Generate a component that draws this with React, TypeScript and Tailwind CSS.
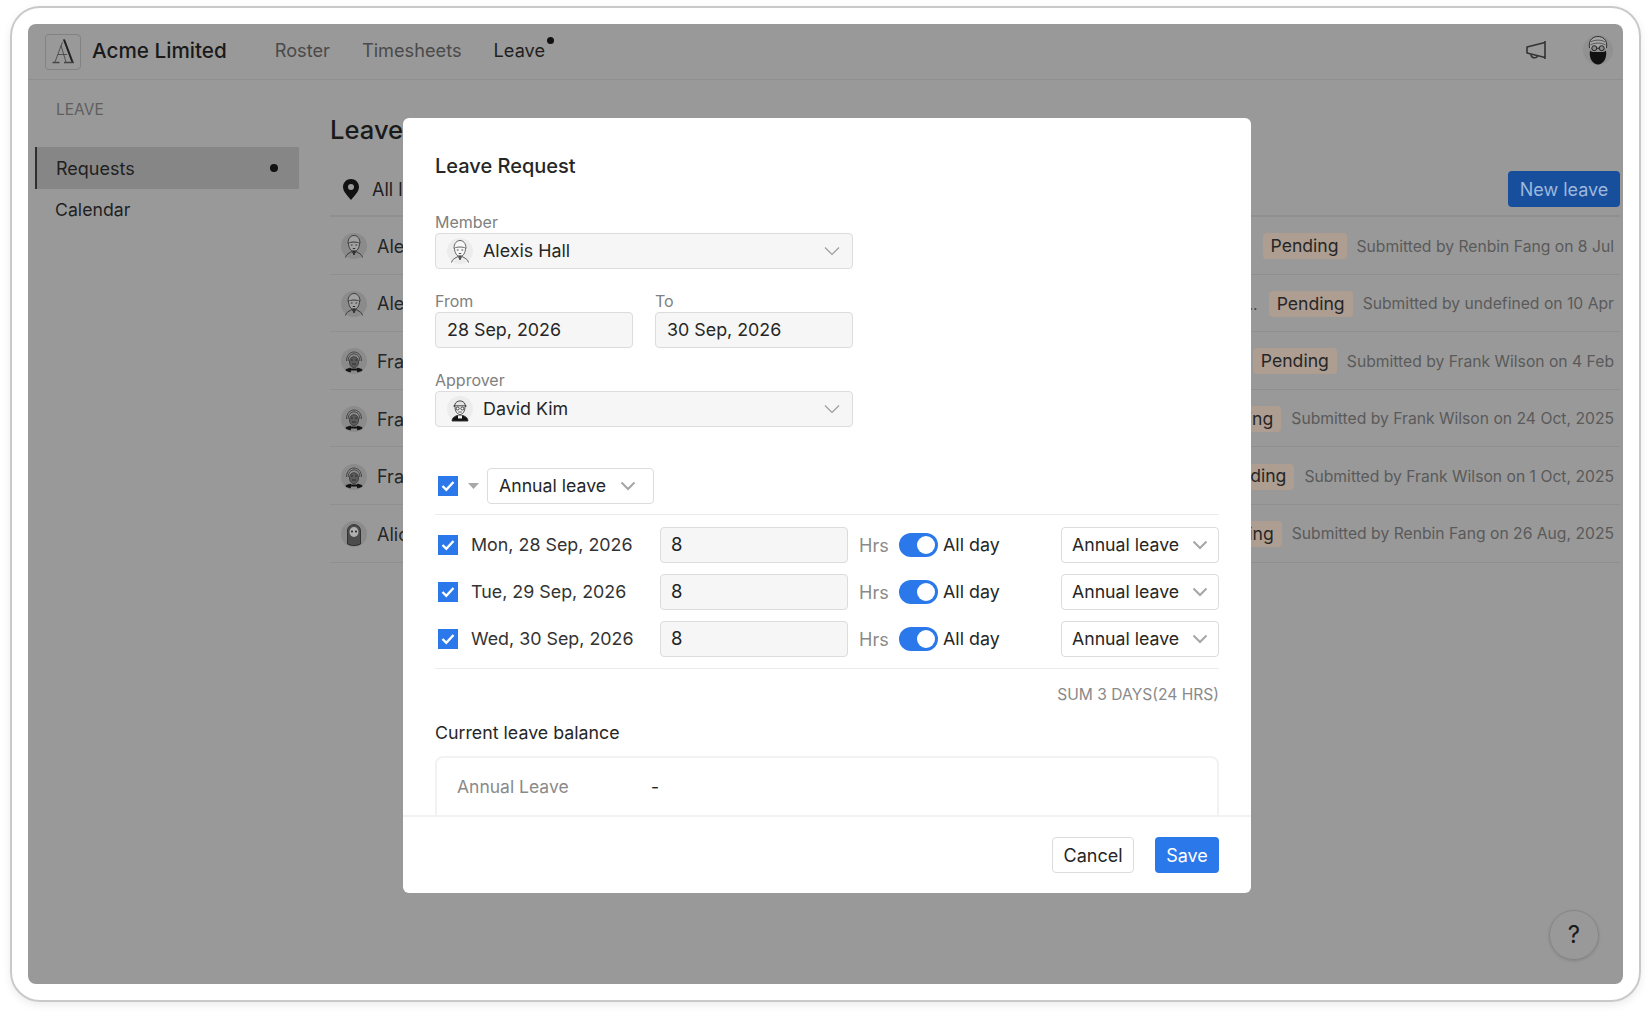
const font = "font-['Inter',sans-serif]";

const Logo = () => (
  <svg width="24" height="26" viewBox="0 0 24 26" fill="none" stroke="#333" strokeWidth="0.7" className="-mt-[2px]">
    <path d="M12.5 1.5L21 24M11.5 4L4 24M10 7.5L15 24M7 16.5H16" />
    <path d="M13 1.5L21.5 24" strokeWidth="2" stroke="#222" />
    <path d="M1.5 24.5H8.5M13 24.5H23" strokeWidth="1.5" stroke="#444" />
  </svg>
);

const Megaphone = () => (
  <svg width="22" height="22" viewBox="0 0 22 22" fill="none" stroke="#333" strokeWidth="1.6" strokeLinejoin="round" className="mb-[3px]">
    <path d="M20 2V20M20 3.5L2 8V14L20 18.5" />
    <path d="M6 15.5C6 19.5 12 19.8 12.5 16.5" />
  </svg>
);

const BeardAvatar = () => (
  <svg width="30" height="30" viewBox="0 0 30 30" className="mb-[4px]">
    <circle cx="15" cy="15" r="15" fill="#919191" />
    <path d="M6.5 13C5 4 11 1.5 15 1.5C19 1.5 25 4 23.5 13" fill="#a6a6a6" stroke="#222" strokeWidth="0.9" />
    <path d="M8 7C11 4.5 19 4.5 22 7M7.5 10C11 7.5 19 7.5 22.5 10" fill="none" stroke="#444" strokeWidth="0.8" />
    <circle cx="11.3" cy="13.2" r="2.5" fill="#8a8a8a" stroke="#222" strokeWidth="1" />
    <circle cx="18.7" cy="13.2" r="2.5" fill="#8a8a8a" stroke="#222" strokeWidth="1" />
    <path d="M13.8 13.2H16.2" stroke="#222" strokeWidth="1" />
    <path d="M7 15.5C8.5 17.5 11 17 15 17C19 17 21.5 17.5 23 15.5C24.5 24 19.5 29.5 15 29.5C10.5 29.5 5.5 24 7 15.5Z" fill="#111" />
  </svg>
);

type AvatarKind = "alexis" | "frank" | "alice" | "david";

const Avatar = ({ kind, light }: { kind: AvatarKind; light?: boolean }) => {
  const bg = light ? "#ececec" : "#8b8b8b";
  const skin = light ? "#f7f7f7" : "#a2a2a2";
  return (
    <svg width="26" height="26" viewBox="0 0 26 26" className="shrink-0">
      <circle cx="13" cy="13" r="13" fill={bg} />
      {kind === "alexis" && (
        <g fill="none" stroke={light ? "#555" : "#333"} strokeWidth="0.9">
          <path d="M7 10.5C7 5 10 2.5 13 2.5C16 2.5 19 5 19 10.5C16 8.5 10 8.5 7 10.5Z" fill={skin} />
          <path d="M7.5 10C7.5 15 10 18.5 13 18.5C16 18.5 18.5 15 18.5 10" fill={skin} />
          <path d="M9.8 12H11.6M14.4 12H16.2M11.8 15.5H14.2" strokeWidth="1.1" />
          <path d="M4.5 24.5C5 21 8.5 20 11 18.5L13 21.5L15 18.5C17.5 20 21 21 21.5 24.5" />
          <path d="M11.8 17.5L13 22L14.2 17.5" fill={light ? "#444" : "#222"} />
        </g>
      )}
      {kind === "david" && (
        <g fill="none" stroke="#333" strokeWidth="0.9">
          <path d="M7.5 10.5C7.5 3 18.5 3 18.5 10.5" fill={light ? "#e2e2e2" : "#777"} />
          <path d="M6.5 10H19.5" strokeWidth="1.2" />
          <path d="M8 10.5C8 15.5 10.5 18.5 13 18.5C15.5 18.5 18 15.5 18 10.5" fill={skin} />
          <circle cx="10.7" cy="12.5" r="1.5" />
          <circle cx="15.3" cy="12.5" r="1.5" />
          <path d="M11.3 16H14.7" />
          <path d="M5 25C5 21.5 8 20.5 10 19.5H16C18 20.5 21 21.5 21 25Z" fill="#111" />
          <path d="M11 19.5H15V22.5H11Z" fill="#eee" stroke="none" />
        </g>
      )}
      {kind === "frank" && (
        <g fill="none" stroke="#333" strokeWidth="0.8">
          <path d="M5.5 13C5.5 1 20.5 1 20.5 13" />
          <path d="M7.2 13C7.2 3.5 18.8 3.5 18.8 13" />
          <path d="M8.5 14C8.5 7 17.5 7 17.5 14C17.5 18 15 19.5 13 19.5C11 19.5 8.5 18 8.5 14Z" fill="#5c5c5c" />
          <path d="M10 12H12M14 12H16M11 16H15" stroke="#222" />
          <path d="M5 21.5L9.5 20V24L5 22.5ZM21 21.5L16.5 20V24L21 22.5Z" fill="#111" stroke="#111" />
          <path d="M9 21.5H17" stroke="#111" strokeWidth="2" />
        </g>
      )}
      {kind === "alice" && (
        <g>
          <path d="M6.5 23V10C6.5 1.5 19.5 1.5 19.5 10V23C16 25 10 25 6.5 23Z" fill="#4c4c4c" stroke="#222" strokeWidth="0.8" />
          <ellipse cx="13" cy="11" rx="4.5" ry="5" fill="#b0b0b0" />
          <circle cx="11" cy="10.5" r="0.9" fill="#111" />
          <circle cx="15" cy="10.5" r="0.9" fill="#111" />
        </g>
      )}
    </svg>
  );
};

const rows: { kind: AvatarKind; name: string; by: string; dots?: boolean }[] = [
  { kind: "alexis", name: "Alexis Hall", by: "Submitted by Renbin Fang on 8 Jul" },
  { kind: "alexis", name: "Alexis Hall", by: "Submitted by undefined on 10 Apr", dots: true },
  { kind: "frank", name: "Frank Wilson", by: "Submitted by Frank Wilson on 4 Feb" },
  { kind: "frank", name: "Frank Wilson", by: "Submitted by Frank Wilson on 24 Oct, 2025" },
  { kind: "frank", name: "Frank Wilson", by: "Submitted by Frank Wilson on 1 Oct, 2025" },
  { kind: "alice", name: "Alice Chen", by: "Submitted by Renbin Fang on 26 Aug, 2025" },
];

const days = ["Mon, 28 Sep, 2026", "Tue, 29 Sep, 2026", "Wed, 30 Sep, 2026"];

const Checkbox = () => (
  <span className="flex h-5 w-5 shrink-0 items-center justify-center bg-[#2b78ea]">
    <svg width="14" height="12" viewBox="0 0 14 12" fill="none" stroke="#fff" strokeWidth="2.4">
      <path d="M1.5 6L5.3 9.8L12.5 2" />
    </svg>
  </span>
);

const Toggle = () => (
  <span className="flex h-6 w-[39px] shrink-0 items-center justify-end rounded-full bg-[#2b78ea] pr-[3px]">
    <span className="h-[18px] w-[18px] rounded-full bg-white" />
  </span>
);

const PersonSelect = ({ kind, name }: { kind: AvatarKind; name: string }) => (
  <div className="flex h-9 w-[418px] items-center rounded border border-[#dcdcdc] bg-[#f6f6f6] pl-[11px] pr-3">
    <Avatar kind={kind} light />
    <span className="ml-[10px] flex-1 pt-px text-[17.85px] text-[#262626]">{name}</span>
    <svg width="16" height="10" viewBox="0 0 16 10" fill="none" stroke="#9a9a9a" strokeWidth="1.1">
      <path d="M1 1.5L8 8.5L15 1.5" />
    </svg>
  </div>
);

const LeaveSelect = ({ width }: { width: string }) => (
  <div className={`flex h-9 items-center justify-between rounded border border-[#dcdcdc] bg-white text-[17.7px] text-[#262626] ${width}`}>
    <span>Annual leave</span>
    <svg width="16" height="10" viewBox="0 0 16 10" fill="none" stroke="#a6a6a6" strokeWidth="2">
      <path d="M1.5 1.5L8 8L14.5 1.5" />
    </svg>
  </div>
);

const DateField = ({ label, value }: { label: string; value: string }) => (
  <div className="w-[198px]">
    <div className="text-[16px] leading-[20px] text-[#808080]">{label}</div>
    <div className="mt-px flex h-9 items-center rounded border border-[#dcdcdc] bg-[#f6f6f6] pl-[11px] pt-px text-[17.85px] text-[#262626]">{value}</div>
  </div>
);

const LeaveModal = () => (
  <div className="flex h-[775px] w-[848px] flex-col overflow-hidden rounded-md bg-white">
    <div className="h-[697px] overflow-hidden px-8 pt-[34px]">
      <div className="text-[20px] font-medium leading-7 text-[#262626]">Leave Request</div>

      <div className="mt-[32px] text-[16px] leading-[20px] text-[#808080]">Member</div>
      <div className="mt-px">
        <PersonSelect kind="alexis" name="Alexis Hall" />
      </div>

      <div className="mt-[22px] flex gap-[22px]">
        <DateField label="From" value="28 Sep, 2026" />
        <DateField label="To" value="30 Sep, 2026" />
      </div>

      <div className="mt-[22px] text-[16px] leading-[20px] text-[#808080]">Approver</div>
      <div className="mt-px">
        <PersonSelect kind="david" name="David Kim" />
      </div>

      <div className="mt-[41px] flex items-center border-b border-[#ebebeb] pb-[10px] pl-[3px]">
        <Checkbox />
        <svg width="11" height="6" viewBox="0 0 11 6" className="ml-[10px]">
          <path d="M0 0H11L5.5 6Z" fill="#a8a8a8" />
        </svg>
        <div className="ml-2">
          <LeaveSelect width="w-[167px] pl-[11px] pr-[17px]" />
        </div>
      </div>

      <div className="flex flex-col gap-[11px] border-b border-[#ebebeb] pb-[11px] pt-[12px]">
        {days.map((day) => (
          <div key={day} className="flex h-9 items-center pl-[3px]">
            <Checkbox />
            <span className="ml-[13px] w-[189px] text-[17.85px] text-[#333]">{day}</span>
            <div className="flex h-9 w-[188px] items-center rounded border border-[#dcdcdc] bg-[#f6f6f6] pl-[10px] text-[18.5px] text-[#222]">8</div>
            <span className="ml-[11px] w-[28px] text-[18px] text-[#8a8a8a]">Hrs</span>
            <span className="ml-[12px]">
              <Toggle />
            </span>
            <span className="ml-[5px] w-[118px] text-[17.85px] text-[#262626]">All day</span>
            <LeaveSelect width="w-[158px] pl-[10px] pr-[10px]" />
          </div>
        ))}
      </div>

      <div className="mt-4 text-right text-[15.6px] leading-[20px] text-[#8a8a8a]">SUM 3 DAYS(24 HRS)</div>

      <div className="mt-[16px] text-[17.8px] leading-6 text-[#262626]">Current leave balance</div>
      <div className="mt-[11px] h-[80px] rounded-lg border-2 border-[#f2f2f2] pl-5 pt-[17px]">
        <div className="flex items-center text-[17.5px] leading-6">
          <span className="w-[194px] text-[#8a8a8a]">Annual Leave</span>
          <span className="text-[#262626]">-</span>
        </div>
      </div>
    </div>
    <div className="flex h-[78px] items-center justify-end gap-[21px] border-t-2 border-[#f2f2f2] px-8">
      <button className="h-9 w-[82px] rounded border border-[#dcdcdc] bg-white text-[18px] text-[#262626]">Cancel</button>
      <button className="h-9 w-16 rounded bg-[#2b78ea] text-[18px] text-white">Save</button>
    </div>
  </div>
);

export default function App() {
  return (
    <div className={`h-[1016px] w-[1652px] overflow-hidden bg-white pl-[10px] pt-[6px] ${font}`}>
      <div className="h-[996px] w-[1631px] rounded-[30px] border-2 border-[#c9c9c9] p-4 shadow-[0_3px_8px_rgba(0,0,0,0.08)]">
        <div className="relative flex h-[960px] w-[1595px] flex-col overflow-hidden rounded-lg bg-[#999999]">
          <header className="flex h-14 shrink-0 items-center border-b border-[#8f8f8f] pl-[17px] pr-[10px]">
            <div className="flex h-9 w-9 items-center justify-center rounded border border-[#828282]">
              <Logo />
            </div>
            <span className="mb-[2px] ml-[11px] text-[20.7px] font-medium text-[#1a1a1a]">Acme Limited</span>
            <nav className="mb-[2px] ml-[48px] flex items-center gap-[32px] text-[18.2px]">
              <span className="text-[#4a4a4a]">Roster</span>
              <span className="text-[#4a4a4a]">Timesheets</span>
              <span className="relative text-[#1f1f1f]">
                Leave
                <span className="absolute -right-[9px] top-0 h-[7px] w-[7px] rounded-full bg-[#111]" />
              </span>
            </nav>
            <div className="ml-auto flex items-center gap-[36px]">
              <Megaphone />
              <BeardAvatar />
            </div>
          </header>

          <div className="flex flex-1">
            <aside className="w-[302px] shrink-0 pl-[7px] pt-5">
              <div className="pl-[21px] text-[15.5px] leading-5 text-[#5f5f5f]">LEAVE</div>
              <div className="mt-[27px] flex h-[42px] w-[264px] items-center justify-between border-l-2 border-[#2e2e2e] bg-[#868686] pl-[19px] pr-[21px] text-[18px] text-[#1f1f1f]">
                Requests
                <span className="h-2 w-2 rounded-full bg-[#111]" />
              </div>
              <div className="flex h-[42px] items-center pl-[20px] text-[17.7px] text-[#1f1f1f]">Calendar</div>
            </aside>

            <main className="flex-1 pr-[3px] pt-[34px]">
              <h1 className="text-[25.6px] font-medium leading-8 text-[#1a1a1a]">Leave</h1>
              <div className="mt-[25px] flex h-[46px] items-start justify-between border-b-2 border-[#8f8f8f]">
                <div className="flex h-9 items-center pl-[13px] text-[18px] text-[#1f1f1f]">
                  <svg width="16" height="21" viewBox="0 0 16 21">
                    <path fillRule="evenodd" d="M8 0C3.6 0 0 3.5 0 8C0 13 5.5 17.5 8 21C10.5 17.5 16 13 16 8C16 3.5 12.4 0 8 0ZM8 5A3 3 0 1 1 8 11A3 3 0 1 1 8 5Z" fill="#111" />
                  </svg>
                  <span className="ml-[13px]">All locations</span>
                </div>
                <button className="h-9 w-[112px] rounded bg-[#174f9d] text-[18px] text-[#9db8dc]">New leave</button>
              </div>
              {rows.map((row, i) => (
                <div key={i} className="flex h-[57.6px] items-center justify-between border-b border-[#8f8f8f] pl-[11px] pr-[6px] pt-[2px]">
                  <div className="flex items-center gap-[10px] text-[18px] text-[#262626]">
                    <Avatar kind={row.kind} />
                    {row.name}
                  </div>
                  <div className="flex items-center gap-[10px]">
                    {row.dots && <span className="mr-[1px] text-[16px] text-[#4a4a4a]">..</span>}
                    <span className="flex h-[26px] w-[84px] items-center justify-center rounded-sm bg-[#ae9e92] text-[17.6px] text-[#262626]">Pending</span>
                    <span className="text-[15.7px] text-[#5a5a5a]">{row.by}</span>
                  </div>
                </div>
              ))}
            </main>
          </div>

          <div className="absolute left-[1521px] top-[886px] flex h-[50px] w-[50px] items-center justify-center rounded-full border border-[#858585] text-[24px] text-[#1a1a1a] shadow-[0_1px_3px_rgba(0,0,0,0.15)]">?</div>

          <div className="absolute left-[375px] top-[94px]">
            <LeaveModal />
          </div>
        </div>
      </div>
    </div>
  );
}
